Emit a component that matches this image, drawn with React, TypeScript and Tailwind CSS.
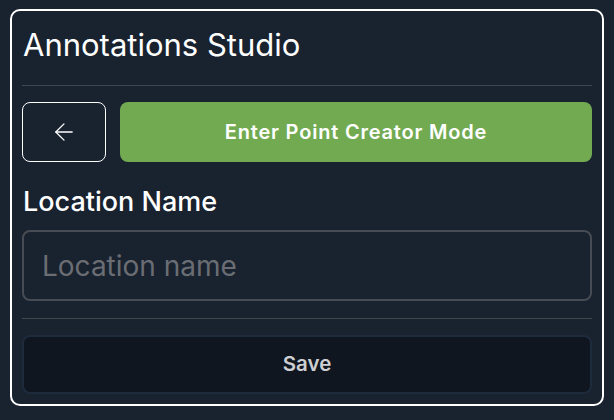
import React from 'react';
import { ArrowLeft } from 'lucide-react';

export default function App() {
  return (
    <div
      className="w-[614px] h-[420px] bg-[#19222f] pt-[9px] px-[10px]"
      style={{ fontFamily: 'Inter, "Noto Sans", sans-serif' }}
    >
      <div className="h-[397px] rounded-[10px] border-2 border-white bg-[#19222f] px-[10px] flex flex-col">
        {/* Header */}
        <div className="h-[75px] flex items-center pb-2 border-b border-[#41474f]">
          <h1 className="text-[31px] leading-none text-white pl-px">Annotations Studio</h1>
        </div>

        {/* Actions */}
        <div className="flex gap-[14px] mt-4">
          <button
            type="button"
            className="w-[84px] h-[60px] rounded-lg border-[1.5px] border-white flex items-center justify-center text-white"
          >
            <ArrowLeft className="w-[28px] h-[28px]" strokeWidth={1.1} />
          </button>
          <button
            type="button"
            className="flex-1 h-[60px] rounded-lg bg-[#72aa52] text-white text-[20px] font-semibold tracking-[0.8px]"
          >
            Enter Point Creator Mode
          </button>
        </div>

        {/* Location form */}
        <label className="mt-[26px] text-[27px] leading-none font-medium text-white pl-px">Location Name</label>
        <input
          type="text"
          placeholder="Location name"
          className="mt-[15px] h-[71px] rounded-lg border-2 border-[#474c54] bg-transparent px-[18px] text-[28px] text-white placeholder:text-[#6a6e74] outline-none"
        />

        <div className="mt-[17px] border-t border-[#41474f]" />

        <button
          type="button"
          className="mt-4 h-[59px] rounded-lg border-2 border-[#1e2b3d] bg-[#0f161f] text-[20.5px] font-semibold text-[#cdcfd2]"
        >
          Save
        </button>
      </div>
    </div>
  );
}
